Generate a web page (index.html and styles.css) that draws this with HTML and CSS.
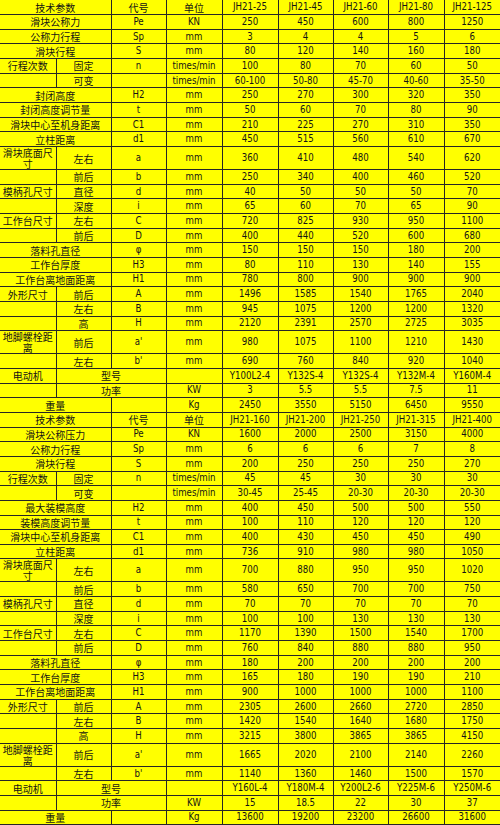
FILE: index.html
```html
<!DOCTYPE html>
<html>
<head>
<meta charset="utf-8">
<link rel="stylesheet" href="styles.css">
</head>
<body>
<table class="spec">
<colgroup>
<col class="w56"><col class="w55"><col class="w55"><col class="w56"><col class="w56"><col class="w55"><col class="w55"><col class="w56"><col class="w56">
</colgroup>
<tbody>
<tr class="first"><td colspan="2" class="zh">技术参数</td><td class="zh">代号</td><td class="zh">单位</td><td>JH21-25</td><td>JH21-45</td><td>JH21-60</td><td>JH21-80</td><td>JH21-125</td></tr>
<tr><td colspan="2" class="zh">滑块公称力</td><td>Pe</td><td>KN</td><td>250</td><td>450</td><td>600</td><td>800</td><td>1250</td></tr>
<tr><td colspan="2" class="zh">公称力行程</td><td>Sp</td><td>mm</td><td>3</td><td>4</td><td>4</td><td>5</td><td>6</td></tr>
<tr><td colspan="2" class="zh">滑块行程</td><td>S</td><td>mm</td><td>80</td><td>120</td><td>140</td><td>160</td><td>180</td></tr>
<tr><td class="zh">行程次数</td><td class="zh">固定</td><td>n</td><td>times/min</td><td>100</td><td>80</td><td>70</td><td>60</td><td>50</td></tr>
<tr><td></td><td class="zh">可变</td><td></td><td>times/min</td><td>60-100</td><td>50-80</td><td>45-70</td><td>40-60</td><td>35-50</td></tr>
<tr><td colspan="2" class="zh">封闭高度</td><td>H2</td><td>mm</td><td>250</td><td>270</td><td>300</td><td>320</td><td>350</td></tr>
<tr><td colspan="2" class="zh">封闭高度调节量</td><td>t</td><td>mm</td><td>50</td><td>60</td><td>70</td><td>80</td><td>90</td></tr>
<tr><td colspan="2" class="zh">滑块中心至机身距离</td><td>C1</td><td>mm</td><td>210</td><td>225</td><td>270</td><td>310</td><td>350</td></tr>
<tr><td colspan="2" class="zh">立柱距离</td><td>d1</td><td>mm</td><td>450</td><td>515</td><td>560</td><td>610</td><td>670</td></tr>
<tr class="tall"><td class="zh">滑块底面尺寸</td><td class="zh">左右</td><td>a</td><td>mm</td><td>360</td><td>410</td><td>480</td><td>540</td><td>620</td></tr>
<tr><td></td><td class="zh">前后</td><td>b</td><td>mm</td><td>250</td><td>340</td><td>400</td><td>460</td><td>520</td></tr>
<tr><td class="zh">模柄孔尺寸</td><td class="zh">直径</td><td>d</td><td>mm</td><td>40</td><td>50</td><td>50</td><td>50</td><td>70</td></tr>
<tr><td></td><td class="zh">深度</td><td>i</td><td>mm</td><td>65</td><td>60</td><td>70</td><td>65</td><td>90</td></tr>
<tr><td class="zh">工作台尺寸</td><td class="zh">左右</td><td>C</td><td>mm</td><td>720</td><td>825</td><td>930</td><td>950</td><td>1100</td></tr>
<tr><td></td><td class="zh">前后</td><td>D</td><td>mm</td><td>400</td><td>440</td><td>520</td><td>600</td><td>680</td></tr>
<tr><td colspan="2" class="zh">落料孔直径</td><td>φ</td><td>mm</td><td>150</td><td>150</td><td>150</td><td>180</td><td>200</td></tr>
<tr><td colspan="2" class="zh">工作台厚度</td><td>H3</td><td>mm</td><td>80</td><td>110</td><td>130</td><td>140</td><td>155</td></tr>
<tr><td colspan="2" class="zh">工作台离地面距离</td><td>H1</td><td>mm</td><td>780</td><td>800</td><td>900</td><td>900</td><td>900</td></tr>
<tr><td class="zh">外形尺寸</td><td class="zh">前后</td><td>A</td><td>mm</td><td>1496</td><td>1585</td><td>1540</td><td>1765</td><td>2040</td></tr>
<tr><td></td><td class="zh">左右</td><td>B</td><td>mm</td><td>945</td><td>1075</td><td>1200</td><td>1200</td><td>1320</td></tr>
<tr><td></td><td class="zh">高</td><td>H</td><td>mm</td><td>2120</td><td>2391</td><td>2570</td><td>2725</td><td>3035</td></tr>
<tr class="tall"><td class="zh">地脚螺栓距离</td><td class="zh">前后</td><td>a'</td><td>mm</td><td>980</td><td>1075</td><td>1100</td><td>1210</td><td>1430</td></tr>
<tr><td></td><td class="zh">左右</td><td>b'</td><td>mm</td><td>690</td><td>760</td><td>840</td><td>920</td><td>1040</td></tr>
<tr><td class="zh">电动机</td><td colspan="2" class="zh">型号</td><td></td><td>Y100L2-4</td><td>Y132S-4</td><td>Y132S-4</td><td>Y132M-4</td><td>Y160M-4</td></tr>
<tr><td></td><td colspan="2" class="zh">功率</td><td>KW</td><td>3</td><td>5.5</td><td>5.5</td><td>7.5</td><td>11</td></tr>
<tr><td colspan="2" class="zh">重量</td><td></td><td>Kg</td><td>2450</td><td>3550</td><td>5150</td><td>6450</td><td>9550</td></tr>

<tr><td colspan="2" class="zh">技术参数</td><td class="zh">代号</td><td class="zh">单位</td><td>JH21-160</td><td>JH21-200</td><td>JH21-250</td><td>JH21-315</td><td>JH21-400</td></tr>
<tr><td colspan="2" class="zh">滑块公称压力</td><td>Pe</td><td>KN</td><td>1600</td><td>2000</td><td>2500</td><td>3150</td><td>4000</td></tr>
<tr><td colspan="2" class="zh">公称力行程</td><td>Sp</td><td>mm</td><td>6</td><td>6</td><td>6</td><td>7</td><td>8</td></tr>
<tr><td colspan="2" class="zh">滑块行程</td><td>S</td><td>mm</td><td>200</td><td>250</td><td>250</td><td>250</td><td>270</td></tr>
<tr><td class="zh">行程次数</td><td class="zh">固定</td><td>n</td><td>times/min</td><td>45</td><td>45</td><td>30</td><td>30</td><td>30</td></tr>
<tr><td></td><td class="zh">可变</td><td></td><td>times/min</td><td>30-45</td><td>25-45</td><td>20-30</td><td>20-30</td><td>20-30</td></tr>
<tr><td colspan="2" class="zh">最大装模高度</td><td>H2</td><td>mm</td><td>400</td><td>450</td><td>500</td><td>500</td><td>550</td></tr>
<tr><td colspan="2" class="zh">装模高度调节量</td><td>t</td><td>mm</td><td>100</td><td>110</td><td>120</td><td>120</td><td>120</td></tr>
<tr><td colspan="2" class="zh">滑块中心至机身距离</td><td>C1</td><td>mm</td><td>400</td><td>430</td><td>450</td><td>450</td><td>490</td></tr>
<tr><td colspan="2" class="zh">立柱距离</td><td>d1</td><td>mm</td><td>736</td><td>910</td><td>980</td><td>980</td><td>1050</td></tr>
<tr class="tall"><td class="zh">滑块底面尺寸</td><td class="zh">左右</td><td>a</td><td>mm</td><td>700</td><td>880</td><td>950</td><td>950</td><td>1020</td></tr>
<tr><td></td><td class="zh">前后</td><td>b</td><td>mm</td><td>580</td><td>650</td><td>700</td><td>700</td><td>750</td></tr>
<tr><td class="zh">模柄孔尺寸</td><td class="zh">直径</td><td>d</td><td>mm</td><td>70</td><td>70</td><td>70</td><td>70</td><td>70</td></tr>
<tr><td></td><td class="zh">深度</td><td>i</td><td>mm</td><td>100</td><td>100</td><td>130</td><td>130</td><td>130</td></tr>
<tr><td class="zh">工作台尺寸</td><td class="zh">左右</td><td>C</td><td>mm</td><td>1170</td><td>1390</td><td>1500</td><td>1540</td><td>1700</td></tr>
<tr><td></td><td class="zh">前后</td><td>D</td><td>mm</td><td>760</td><td>840</td><td>880</td><td>880</td><td>950</td></tr>
<tr><td colspan="2" class="zh">落料孔直径</td><td>φ</td><td>mm</td><td>180</td><td>200</td><td>200</td><td>200</td><td>200</td></tr>
<tr><td colspan="2" class="zh">工作台厚度</td><td>H3</td><td>mm</td><td>165</td><td>180</td><td>190</td><td>190</td><td>210</td></tr>
<tr><td colspan="2" class="zh">工作台离地面距离</td><td>H1</td><td>mm</td><td>900</td><td>1000</td><td>1000</td><td>1000</td><td>1100</td></tr>
<tr><td class="zh">外形尺寸</td><td class="zh">前后</td><td>A</td><td>mm</td><td>2305</td><td>2600</td><td>2660</td><td>2720</td><td>2850</td></tr>
<tr><td></td><td class="zh">左右</td><td>B</td><td>mm</td><td>1420</td><td>1540</td><td>1640</td><td>1680</td><td>1750</td></tr>
<tr><td></td><td class="zh">高</td><td>H</td><td>mm</td><td>3215</td><td>3800</td><td>3865</td><td>3865</td><td>4150</td></tr>
<tr class="tall"><td class="zh">地脚螺栓距离</td><td class="zh">前后</td><td>a'</td><td>mm</td><td>1665</td><td>2020</td><td>2100</td><td>2140</td><td>2260</td></tr>
<tr><td></td><td class="zh">左右</td><td>b'</td><td>mm</td><td>1140</td><td>1360</td><td>1460</td><td>1500</td><td>1570</td></tr>
<tr><td class="zh">电动机</td><td colspan="2" class="zh">型号</td><td></td><td>Y160L-4</td><td>Y180M-4</td><td>Y200L2-6</td><td>Y225M-6</td><td>Y250M-6</td></tr>
<tr><td></td><td colspan="2" class="zh">功率</td><td>KW</td><td>15</td><td>18.5</td><td>22</td><td>30</td><td>37</td></tr>
<tr><td colspan="2" class="zh">重量</td><td></td><td>Kg</td><td>13600</td><td>19200</td><td>23200</td><td>26600</td><td>31600</td></tr>
</tbody>
</table>
</body>
</html>
```
FILE: styles.css
```css
html, body {
  margin: 0;
  padding: 0;
  background: #ffff00;
}
.spec {
  width: 500px;
  border-collapse: collapse;
  table-layout: fixed;
  background: #ffff00;
  color: #141414;
  font-family: "DejaVu Sans", "Noto Sans CJK SC", sans-serif;
  font-stretch: condensed;
  font-size: 9.6px;
}
.w56 { width: 56px; }
.w55 { width: 55px; }
.spec tr { height: 14.66px; }
.spec tr.tall { height: 23px; }
.spec td {
  border: 1px solid #262626;
  padding: 0;
  text-align: center;
  vertical-align: middle;
  line-height: 12px;
  white-space: normal;
  overflow: hidden;
}
.spec tr.first td { border-top: none; }
.spec td:first-child { border-left: none; }
.spec td:last-child { border-right: none; }
.spec td.zh {
  font-family: "Noto Sans CJK SC", sans-serif;
  font-stretch: normal;
  font-size: 10px;
  line-height: 11px;
}
```
